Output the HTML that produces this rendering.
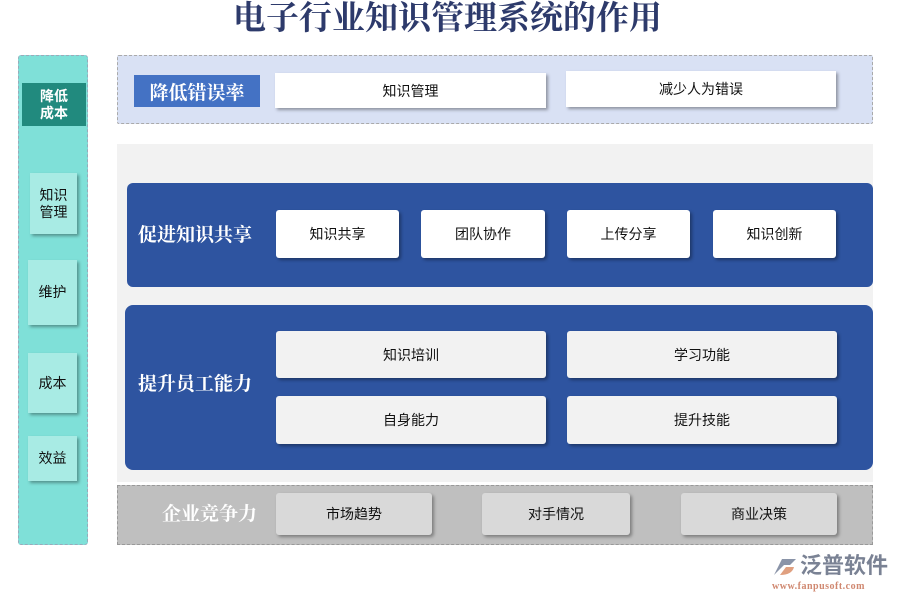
<!DOCTYPE html><html><head><meta charset="utf-8"><style>
body{margin:0;width:900px;height:600px;background:#fff;position:relative;overflow:hidden;font-family:"Liberation Sans","Noto Sans CJK SC",sans-serif}
div{position:absolute;box-sizing:border-box}
.c{display:flex;align-items:center;justify-content:center;text-align:center;font-size:14px;color:#111}
.lb{color:#fff;font-weight:bold;font-family:"Liberation Serif","Noto Serif CJK SC",serif;font-size:19px}
.sh{box-shadow:2px 2px 3px rgba(0,0,0,.35)}
.w{background:#fff;border-radius:3px}
.g{background:#f2f2f2;border-radius:3px}
.d{background:#d9d9d9;border-radius:3px}
.t{background:#a8ebe4;line-height:17px}
</style></head><body>
<div style="left:0;top:0;width:895px;height:40px;text-align:center;font-family:'Liberation Serif','Noto Serif CJK SC',serif;font-weight:bold;font-size:33px;color:#2d3a6b;line-height:38px">电子行业知识管理系统的作用</div>
<div style="left:18px;top:55px;width:70px;height:490px;background:#7fe0d8;border:1px dashed #9ab;border-radius:3px"></div>
<div class="c" style="left:22px;top:83px;width:64px;height:43px;background:#218a7e;color:#fff;font-weight:bold;line-height:17px">降低<br>成本</div>
<div class="c t sh" style="left:30px;top:173px;width:47px;height:61px">知识<br>管理</div>
<div class="c t sh" style="left:28px;top:260px;width:49px;height:65px">维护</div>
<div class="c t sh" style="left:28px;top:353px;width:49px;height:60px">成本</div>
<div class="c t sh" style="left:28px;top:436px;width:49px;height:45px">效益</div>
<div style="left:117px;top:55px;width:756px;height:69px;background:#d9e1f4;border:1px dashed #aaa;border-radius:2px"></div>
<div class="c lb" style="left:134px;top:75px;width:126px;height:32px;background:#4472c4">降低错误率</div>
<div class="c w sh" style="left:275px;top:73px;width:271px;height:35px;border-radius:0">知识管理</div>
<div class="c w sh" style="left:566px;top:71px;width:270px;height:36px;border-radius:0">减少人为错误</div>
<div style="left:117px;top:144px;width:756px;height:338px;background:#f2f2f2"></div>
<div style="left:127px;top:183px;width:746px;height:104px;background:#2e54a0;border-radius:6px"></div>
<div class="lb" style="left:138px;top:224px;line-height:24px">促进知识共享</div>
<div class="c w sh" style="left:276px;top:210px;width:123px;height:48px">知识共享</div>
<div class="c w sh" style="left:421px;top:210px;width:124px;height:48px">团队协作</div>
<div class="c w sh" style="left:567px;top:210px;width:123px;height:48px">上传分享</div>
<div class="c w sh" style="left:713px;top:210px;width:123px;height:48px">知识创新</div>
<div style="left:125px;top:305px;width:748px;height:165px;background:#2e54a0;border-radius:8px"></div>
<div class="lb" style="left:138px;top:373px;line-height:24px">提升员工能力</div>
<div class="c g sh" style="left:276px;top:331px;width:270px;height:47px">知识培训</div>
<div class="c g sh" style="left:567px;top:331px;width:270px;height:47px">学习功能</div>
<div class="c g sh" style="left:276px;top:396px;width:270px;height:48px">自身能力</div>
<div class="c g sh" style="left:567px;top:396px;width:270px;height:48px">提升技能</div>
<div style="left:117px;top:485px;width:756px;height:60px;background:#bfbfbf;border:1px dashed #999"></div>
<div class="lb" style="left:162px;top:503px;line-height:24px">企业竞争力</div>
<div class="c d sh" style="left:276px;top:493px;width:156px;height:42px">市场趋势</div>
<div class="c d sh" style="left:482px;top:493px;width:148px;height:42px">对手情况</div>
<div class="c d sh" style="left:681px;top:493px;width:156px;height:42px">商业决策</div>
<div style="left:770px;top:555px;width:30px;height:24px"><svg width="30" height="24"><path d="M4 20 L12 4 L26 4 L20 10 L14 10 Z" fill="#8a94a8"/><path d="M10 20 L16 12 L24 12 Q22 20 10 20Z" fill="#e0a080"/></svg></div>
<div style="left:800px;top:552px;font-size:22px;font-weight:bold;color:#7a8294;line-height:28px">泛普软件</div>
<div style="left:772px;top:581px;font-size:10px;color:#d08870;font-family:'Liberation Serif',serif;font-weight:bold;letter-spacing:.5px">www.fanpusoft.com</div>
</body></html>
